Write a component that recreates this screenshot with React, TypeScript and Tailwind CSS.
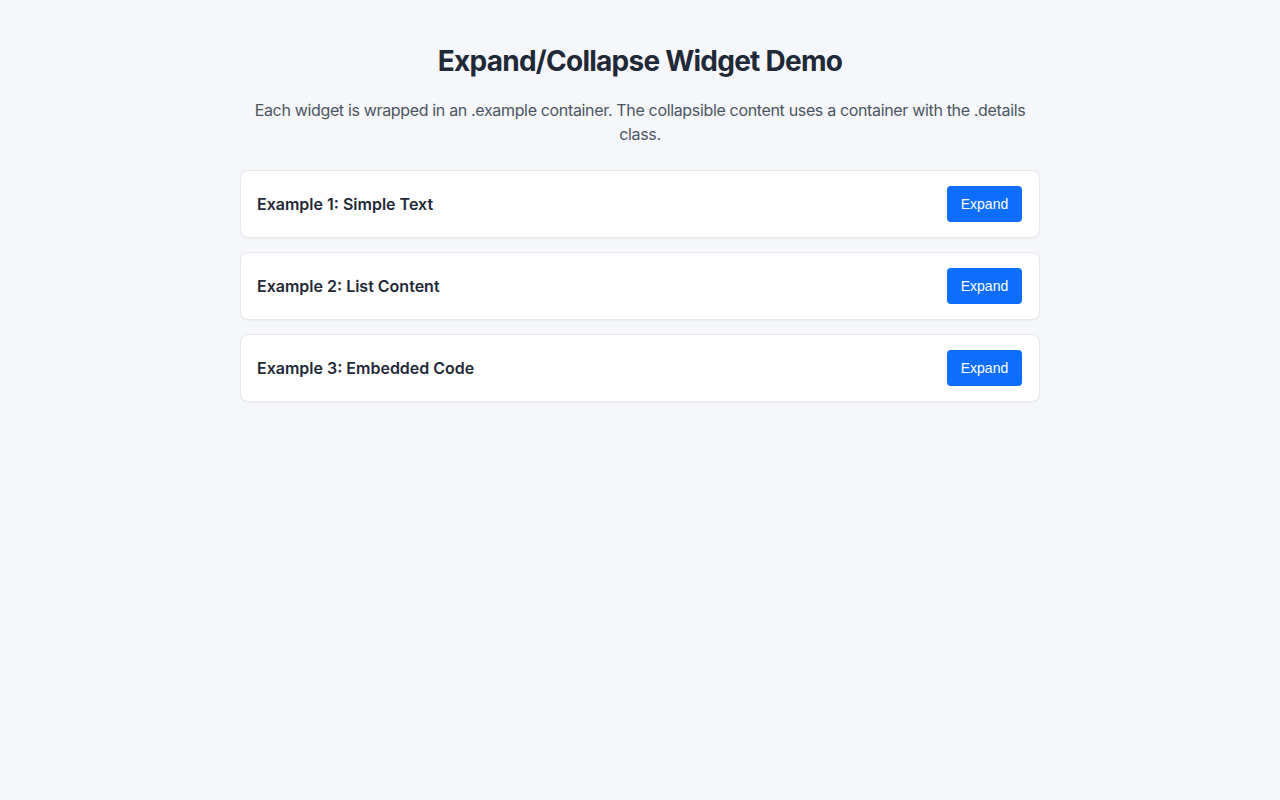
const examples = [
  'Example 1: Simple Text',
  'Example 2: List Content',
  'Example 3: Embedded Code',
];

export default function App() {
  return (
    <div className="min-h-screen bg-[#f5f7fa] font-['Inter',sans-serif] text-[#1f2937]">
      <div className="mx-auto w-[800px] pt-[44px]">
        <h1 className="text-center text-[28px] font-bold leading-[34px] tracking-[-0.75px]">
          Expand/Collapse Widget Demo
        </h1>
        <p className="mt-[20px] text-center text-base leading-6 tracking-[-0.34px] text-[#4b5563]">
          Each widget is wrapped in an .example container. The collapsible content uses a container with the .details
          class.
        </p>
        <div className="mt-[24px] flex flex-col gap-[14px]">
          {examples.map((title) => (
            <div
              key={title}
              className="flex h-[68px] items-center justify-between rounded-lg border border-[#e5e7eb] bg-white pl-4 pr-[17px] shadow-[0_1px_2px_rgba(0,0,0,0.04)]"
            >
              <h3 className="text-base font-semibold">{title}</h3>
              <button className="h-9 w-[75px] rounded bg-[#0d6efd] font-['Liberation_Sans',Arial,sans-serif] text-sm text-white">
                Expand
              </button>
            </div>
          ))}
        </div>
      </div>
    </div>
  );
}
